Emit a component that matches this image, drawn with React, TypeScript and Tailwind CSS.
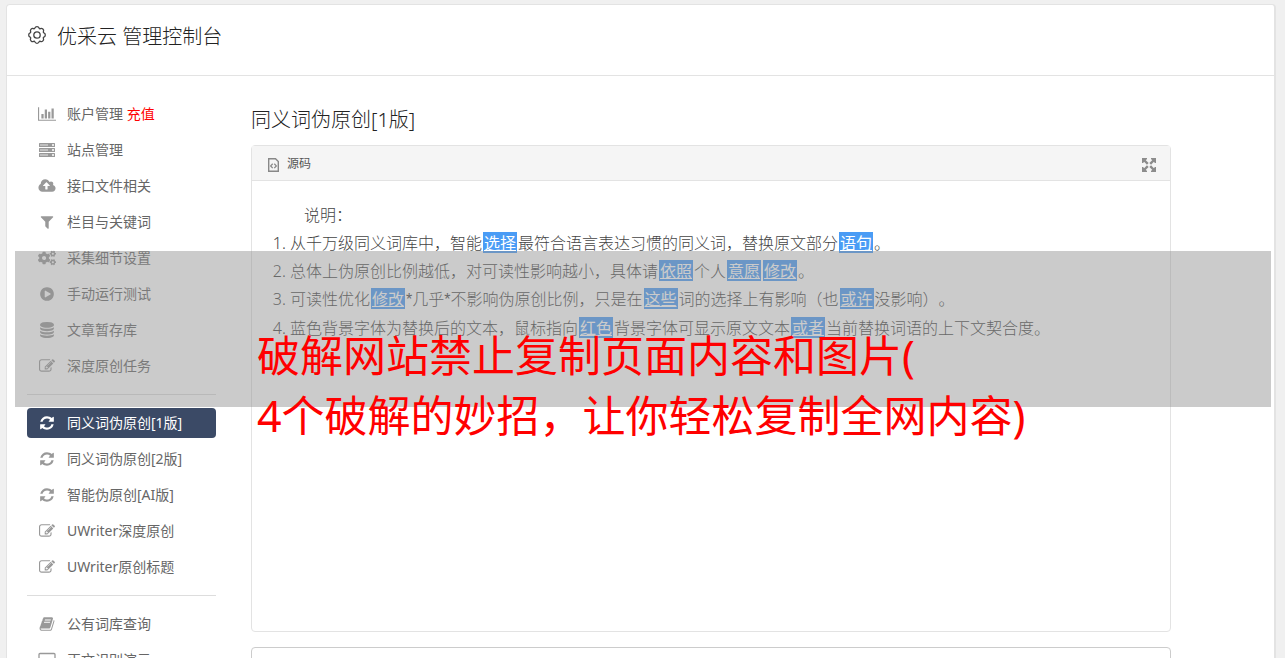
import React from "react";
import { FaCogs } from "react-icons/fa";

const sans = "font-['Noto_Sans','Noto_Sans_CJK_SC',sans-serif]";

const paths = {
  chart: "M640 896v512h-256v-512h256zm384-512v1024h-256v-1024h256zm1024 1152v128h-2048v-1536h128v1408h1920zm-640-896v768h-256v-768h256zm384-384v1152h-256v-1152h256z",
  cloud: "M1280 864q0-14-9-23l-352-352q-9-9-23-9t-23 9l-351 351q-10 12-10 24 0 14 9 23t23 9h224v352q0 13 9.5 22.5t22.5 9.5h192q13 0 22.5-9.5t9.5-22.5v-352h224q13 0 22.5-9.5t9.5-22.5zm640 288q0 159-112.5 271.5t-271.5 112.5h-1088q-185 0-316.5-131.5t-131.5-316.5q0-130 70-240t188-165q-2-30-2-43 0-212 150-362t362-150q156 0 285.5 87t188.5 231q71-62 166-62 106 0 181 75t75 181q0 76-41 138 130 31 213.5 135.5t83.5 238.5z",
  filter: "M1595 295q17 41-14 70l-493 493v742q0 42-39 59-13 5-25 5-27 0-45-19l-256-256q-19-19-19-45v-486l-493-493q-31-29-14-70 17-39 59-39h1280q42 0 59 39z",
  play: "M896 128q209 0 385.5 103t279.5 279.5 103 385.5-103 385.5-279.5 279.5-385.5 103-385.5-103-279.5-279.5-103-385.5 103-385.5 279.5-279.5 385.5-103zm384 823q32-18 32-55t-32-55l-544-320q-31-19-64-1-32 19-32 56v640q0 37 32 56 16 8 32 8 17 0 32-9z",
  database: "M896 768q237 0 443-43t325-127v170q0 69-103 128t-280 93.5-385 34.5-385-34.5-280-93.5-103-128v-170q119 84 325 127t443 43zm0 768q237 0 443-43t325-127v170q0 69-103 128t-280 93.5-385 34.5-385-34.5-280-93.5-103-128v-170q119 84 325 127t443 43zm0-384q237 0 443-43t325-127v170q0 69-103 128t-280 93.5-385 34.5-385-34.5-280-93.5-103-128v-170q119 84 325 127t443 43zm0-1152q208 0 385 34.5t280 93.5 103 128v128q0 69-103 128t-280 93.5-385 34.5-385-34.5-280-93.5-103-128v-128q0-69 103-128t280-93.5 385-34.5z",
  edit: "M888 1184l116-116-152-152-116 116v56h96v96h56zm440-720q-16-16-33 1l-350 350q-17 17-1 33t33-1l350-350q17-17 1-33zm80 594v190q0 119-84.5 203.5t-203.5 84.5h-832q-119 0-203.5-84.5t-84.5-203.5v-832q0-119 84.5-203.5t203.5-84.5h832q63 0 117 25 15 7 18 23 3 17-9 29l-49 49q-14 14-32 8-23-6-45-6h-832q-66 0-113 47t-47 113v832q0 66 47 113t113 47h832q66 0 113-47t47-113v-126q0-13 9-22l64-64q15-15 35-7t20 29zm-96-738l288 288-672 672h-288v-288zm444 132l-92 92-288-288 92-92q28-28 68-28t68 28l152 152q28 28 28 68t-28 68z",
  refresh: "M1639 1056q0 5-1 7-64 268-268 434.5t-478 166.5q-146 0-282.5-55t-243.5-157l-129 129q-19 19-45 19t-45-19-19-45v-448q0-26 19-45t45-19h448q26 0 45 19t19 45-19 45l-137 137q71 66 161 102t187 36q134 0 250-65t186-179q11-17 53-117 8-23 30-23h192q13 0 22.5 9.5t9.5 22.5zm25-800v448q0 26-19 45t-45 19h-448q-26 0-45-19t-19-45 19-45l138-138q-148-137-349-137-134 0-250 65t-186 179q-11 17-53 117-8 23-30 23h-199q-13 0-22.5-9.5t-9.5-22.5v-7q65-268 270-434.5t480-166.5q146 0 284 55.5t245 156.5l130-129q19-19 45-19t45 19 19 45z",
  book: "M1703 478q40 57 18 129l-275 906q-19 64-76.5 107.5t-122.5 43.5h-923q-77 0-148.5-53.5t-99.5-131.5q-24-67-2-127 0-4 3-27t4-37q1-8-3-21.5t-3-19.5q2-11 8-21t16.5-23.5 16.5-23.5q23-38 45-91.5t30-91.5q3-10 .5-30t-.5-28q3-11 17-28t17-23q21-36 42-92t25-90q1-9-2.5-32t.5-28q4-13 22-30.5t22-22.5q19-26 42.5-84.5t27.5-96.5q1-8-3-25.5t-2-26.5q2-8 9-18t18-23 17-21q8-12 16.5-30.5t15-35 16-36 19.5-32 26.5-23.5 36-11.5 47.5 5.5l-1 3q38-9 51-9h761q74 0 114 56t18 130l-274 906q-36 119-71.5 153.5t-128.5 34.5h-869q-27 0-38 15-11 16-1 43 24 70 144 70h923q29 0 56-15.5t35-41.5l300-987q7-22 5-57 38 15 59 43zm-1064 2q-4 13 2 22.5t20 9.5h608q13 0 25.5-9.5t16.5-22.5l21-64q4-13-2-22.5t-20-9.5h-608q-13 0-25.5 9.5t-16.5 22.5zm-83 256q-4 13 2 22.5t20 9.5h608q13 0 25.5-9.5t16.5-22.5l21-64q4-13-2-22.5t-20-9.5h-608q-13 0-25.5 9.5t-16.5 22.5z",
};

type IconName = keyof typeof paths | "server" | "cogs" | "laptop";

function NavIcon({ name }: { name: IconName }) {
  if (name === "cogs") return <FaCogs className="size-[18px]" aria-hidden="true" />;
  if (name === "server")
    return (
      <svg viewBox="0 0 18 16" className="h-4 w-[18px]" aria-hidden="true">
        {[1, 6, 11].map((y) => (
          <g key={y}>
            <rect x="1" y={y} width="16" height="4" rx="0.5" fill="currentColor" />
            <rect x="2" y={y + 1.5} width="8" height="1" fill="#fff" opacity="0.75" />
            <rect x="14" y={y + 1} width="2" height="2" rx="1" fill="#fff" />
          </g>
        ))}
      </svg>
    );
  if (name === "laptop")
    return (
      <svg viewBox="0 0 18 16" className="h-4 w-[18px]" fill="none" stroke="currentColor" strokeWidth="1.3" aria-hidden="true">
        <rect x="1" y="1.5" width="16" height="11" rx="1" />
        <path d="M5 15h8" />
      </svg>
    );
  const wide = name === "chart" || name === "cloud";
  return (
    <svg
      viewBox={name === "chart" ? "0 0 2048 1792" : name === "cloud" ? "0 0 1920 1792" : "0 0 1792 1792"}
      className={wide ? "h-4 w-[18px]" : "size-4"}
      fill="currentColor"
      aria-hidden="true"
    >
      <path d={paths[name]} />
    </svg>
  );
}

type Item = { icon: IconName; label: string; extra?: string; active?: boolean };

const groups: Item[][] = [
  [
    { icon: "chart", label: "账户管理", extra: "充值" },
    { icon: "server", label: "站点管理" },
    { icon: "cloud", label: "接口文件相关" },
    { icon: "filter", label: "栏目与关键词" },
    { icon: "cogs", label: "采集细节设置" },
    { icon: "play", label: "手动运行测试" },
    { icon: "database", label: "文章暂存库" },
    { icon: "edit", label: "深度原创任务" },
  ],
  [
    { icon: "refresh", label: "同义词伪原创[1版]", active: true },
    { icon: "refresh", label: "同义词伪原创[2版]" },
    { icon: "refresh", label: "智能伪原创[AI版]" },
    { icon: "edit", label: "UWriter深度原创" },
    { icon: "edit", label: "UWriter原创标题" },
  ],
  [
    { icon: "book", label: "公有词库查询" },
    { icon: "laptop", label: "正文识别演示" },
  ],
];

function NavItem({ item }: { item: Item }) {
  return (
    <li>
      <a
        href="#"
        className={
          item.active
            ? "flex h-[30px] items-center gap-2.5 rounded bg-[#3b4a66] pl-2.5 text-sm text-white"
            : "flex h-[30px] items-center gap-2.5 rounded pl-2.5 text-sm text-[#666]"
        }
      >
        <span className={item.active ? "flex w-5 justify-center text-white" : "flex w-5 justify-center text-[#999]"}>
          <NavIcon name={item.icon} />
        </span>
        <span>
          {item.label}
          {item.extra && <span className="text-[#f00]"> {item.extra}</span>}
        </span>
      </a>
    </li>
  );
}

function Hl({ children }: { children: React.ReactNode }) {
  return (
    <span className="mx-px mt-[3px] inline-block h-[21px] bg-[#4a9cf5] px-px align-top leading-[22px] font-normal text-white underline">
      {children}
    </span>
  );
}

function Star() {
  return <span className="font-['Liberation_Sans',sans-serif]">*</span>;
}

function GearIcon() {
  return (
    <svg viewBox="0 0 20 20" className="size-5" fill="none" stroke="#444" strokeWidth="1.3" strokeLinejoin="round" aria-hidden="true">
      <path d="M7.9 3.1Q8.4 1.7 10 1.7T12.1 3.1Q12.6 4 13.4 3.6Q14.7 3 15.9 4.1T16.4 6.6Q16 7.5 16.9 7.9Q18.3 8.4 18.3 10T16.9 12.1Q16 12.5 16.4 13.4Q17 14.7 15.9 15.9T13.4 16.4Q12.6 16 12.1 16.9Q11.6 18.3 10 18.3T7.9 16.9Q7.5 16 6.6 16.4Q5.3 17 4.1 15.9T3.6 13.4Q4 12.5 3.1 12.1Q1.7 11.6 1.7 10T3.1 7.9Q4 7.5 3.6 6.6Q3 5.3 4.1 4.1T6.6 3.6Q7.5 4 7.9 3.1Z" />
      <circle cx="10" cy="10" r="3.2" />
    </svg>
  );
}

export default function App() {
  return (
    <div className={`relative h-screen overflow-hidden bg-[#f0f0f0] pt-1 pr-[9px] pl-1.5 [text-spacing-trim:space-all] ${sans}`}>
      <div className="min-h-full rounded-t border border-r-2 border-[#e3e3e3] bg-white">
        <header className="flex h-[71px] items-start gap-2.5 border-b border-[#e3e3e3] pt-4 pl-5">
          <span className="pt-1">
            <GearIcon />
          </span>
          <h1 className="text-xl leading-8 font-light text-[#222]">优采云 管理控制台</h1>
        </header>
        <div className="flex gap-[35px] pt-[23px] pr-[103px] pl-5">
          <nav className="w-[189px] shrink-0">
            {groups.map((group, i) => (
              <React.Fragment key={i}>
                {i > 0 && <hr className="my-[13px] border-[#ddd]" />}
                <ul className="flex flex-col gap-1.5">
                  {group.map((item) => (
                    <NavItem key={item.label} item={item} />
                  ))}
                </ul>
              </React.Fragment>
            ))}
          </nav>
          <main className="min-w-0 flex-1 pt-[5px]">
            <h2 className="text-xl leading-8 font-light text-[#222]">同义词伪原创[1版]</h2>
            <section className="mt-[9px] h-[487px] rounded border border-[#e3e3e3]">
              <div className="flex h-[35px] items-center justify-between border-b border-[#e3e3e3] bg-[#f5f5f5] pr-3.5 pl-4">
                <button type="button" className="flex items-center gap-2 pt-0.5 text-xs text-[#555]">
                  <svg viewBox="0 0 11 14" className="mt-0.5 h-3.5 w-[11px]" fill="none" stroke="#888" aria-hidden="true">
                    <path strokeWidth="1.4" d="M.7.7H7.5L10.3 3.5V13.3H.7Z" />
                    <path strokeWidth="1.3" d="M4.7 5.7L2.7 7.9L4.7 10.1M6.3 5.7L8.3 7.9L6.3 10.1" />
                  </svg>
                  源码
                </button>
                <button type="button" aria-label="全屏">
                  <svg viewBox="0 0 14 14" className="mt-1 size-3.5" fill="#8c8c8c" stroke="#8c8c8c" strokeWidth="2.4" aria-hidden="true">
                    <path stroke="none" d="M0 0H5V1L1 5H0ZM14 0V5H13L9 1V0ZM0 14V9H1L5 13V14ZM14 14H9V13L13 9H14Z" />
                    <path d="M2 2L5.8 5.8M12 2L8.2 5.8M2 12L5.8 8.2M12 12L8.2 8.2" />
                  </svg>
                </button>
              </div>
              <div className="px-5 pt-5 text-base leading-7 font-light text-[#444]">
                <p className="indent-8">说明：</p>
                <ol className="list-decimal pl-[18px]">
                  <li>
                    从千万级同义词库中，智能<Hl>选择</Hl>最符合语言表达习惯的同义词，替换原文部分<Hl>语句</Hl>。
                  </li>
                  <li>
                    总体上伪原创比例越低，对可读性影响越小，具体请<Hl>依照</Hl>个人<Hl>意愿</Hl><Hl>修改</Hl>。
                  </li>
                  <li>
                    可读性优化<Hl>修改</Hl><Star />几乎<Star />不影响伪原创比例，只是在<Hl>这些</Hl>词的选择上有影响（也<Hl>或许</Hl>没影响）。
                  </li>
                  <li>
                    蓝色背景字体为替换后的文本，鼠标指向<Hl>红色</Hl>背景字体可显示原文文本<Hl>或者</Hl>当前替换词语的上下文契合度。
                  </li>
                </ol>
              </div>
            </section>
            <textarea aria-label="原文" className="mt-[15px] block h-40 w-full resize-none rounded border border-[#ccc] bg-white" />
          </main>
        </div>
      </div>
      <div className="absolute top-[251px] right-3.5 left-[15px] h-[156px] bg-[#919191]/47 pt-[75px] pl-[242px]">
        <p className="text-[43px] leading-[60px] whitespace-nowrap text-[#f00]">
          破解网站禁止复制页面内容和图片(
          <br />
          4个破解的妙招，让你轻松复制全网内容)
        </p>
      </div>
    </div>
  );
}
